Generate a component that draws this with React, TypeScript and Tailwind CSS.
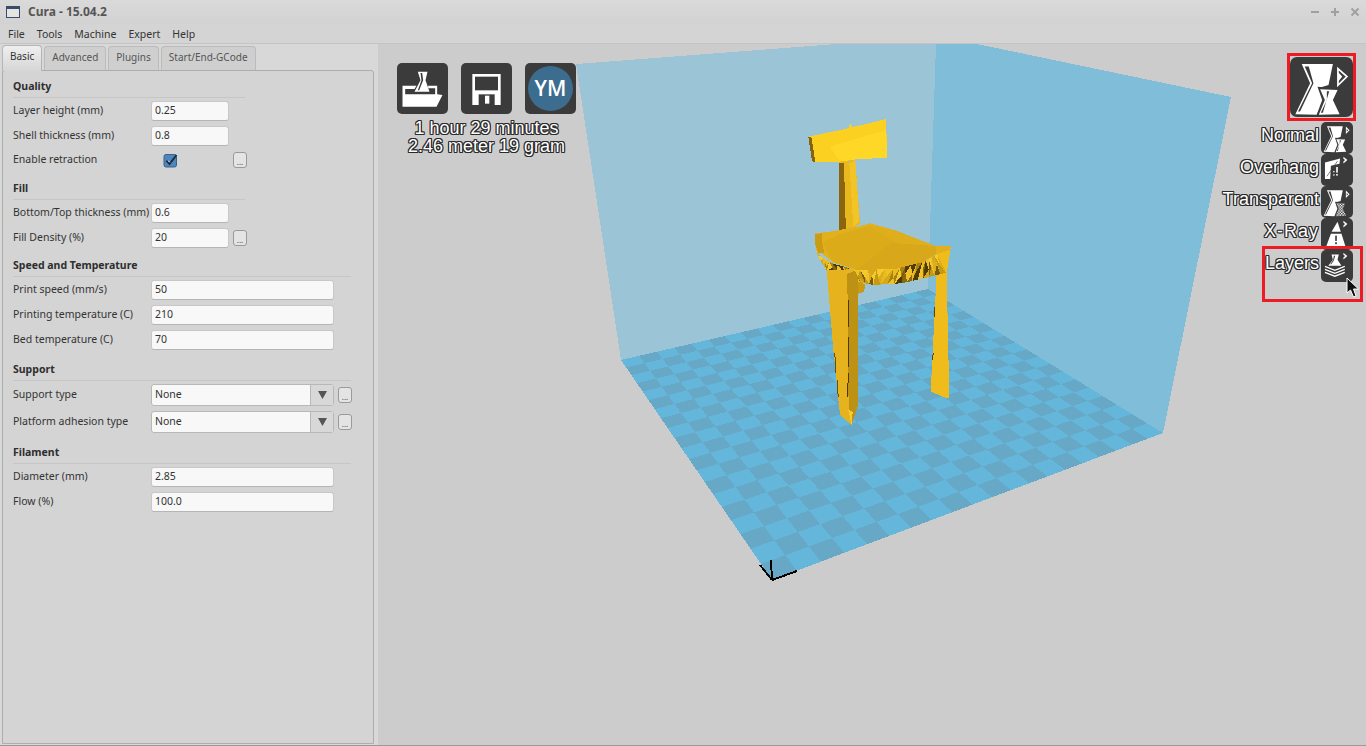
import React from "react";

const FONT = { fontFamily: '"Noto Sans", "Open Sans", sans-serif' };

// floor corners on screen, in page coordinates
const L: [number, number] = [621, 360];
const F: [number, number] = [772, 580];
const R: [number, number] = [1163, 433];
const B: [number, number] = [928, 289];

function makeProjector() {
  const [x0, y0] = L;
  const [x1, y1] = F;
  const [x2, y2] = R;
  const [x3, y3] = B;
  const dx1 = x1 - x2;
  const dx2 = x3 - x2;
  const sx = x0 - x1 + x2 - x3;
  const dy1 = y1 - y2;
  const dy2 = y3 - y2;
  const sy = y0 - y1 + y2 - y3;
  const den = dx1 * dy2 - dx2 * dy1;
  const g = (sx * dy2 - dx2 * sy) / den;
  const h = (dx1 * sy - sx * dy1) / den;
  const a = x1 - x0 + g * x1;
  const b = x3 - x0 + h * x3;
  const d = y1 - y0 + g * y1;
  const e = y3 - y0 + h * y3;
  return (u: number, v: number) => {
    const w = g * u + h * v + 1;
    return `${((a * u + b * v + x0) / w).toFixed(1)},${((d * u + e * v + y0) / w).toFixed(1)}`;
  };
}

function Floor() {
  const p = makeProjector();
  const n = 20;
  const cells: string[] = [];
  for (let i = 0; i < n; i++) {
    for (let j = 0; j < n; j++) {
      if ((i + j) % 2 === 0) continue;
      cells.push(
        [p(i / n, j / n), p((i + 1) / n, j / n), p((i + 1) / n, (j + 1) / n), p(i / n, (j + 1) / n)].join(" ")
      );
    }
  }
  return (
    <g>
      <polygon points={`${L.join(",")} ${F.join(",")} ${R.join(",")} ${B.join(",")}`} fill="#64b6da" />
      {cells.map((c, i) => (
        <polygon key={i} points={c} fill="#66a8c6" />
      ))}
    </g>
  );
}

type Pt = [number, number];

const RIM_TOP: Pt[] = [[82, 432], [125, 460], [200, 480], [320, 476], [400, 456], [442, 432]];
const RIM_BOTTOM: Pt[] = [[88, 445], [110, 482], [200, 515], [250, 525], [335, 520], [400, 505], [468, 488]];
const RIM_COLORS = ["#e8bb22", "#7a5b0a", "#d7a91a", "#f4ca2c", "#c49a14", "#4f3b06", "#eec227", "#a8820f", "#dcae1c", "#f0c429", "#8a680d"];

function along(line: Pt[], t: number): Pt {
  const s = t * (line.length - 1);
  const i = Math.min(Math.floor(s), line.length - 2);
  const f = s - i;
  return [line[i][0] + (line[i + 1][0] - line[i][0]) * f, line[i][1] + (line[i + 1][1] - line[i][1]) * f];
}

// ragged underside of the seat, a strip of small facets
function Rim() {
  const n = 24;
  const tris: { pts: string; fill: string }[] = [];
  for (let i = 0; i < n; i++) {
    const a = along(RIM_TOP, i / n);
    const b = along(RIM_TOP, (i + 1) / n);
    const c = along(RIM_BOTTOM, i / n);
    const d = along(RIM_BOTTOM, (i + 1) / n);
    const m: Pt = [(a[0] + d[0]) / 2 + ((i * 13) % 9) - 4, (a[1] + d[1]) / 2 + ((i * 7) % 11) - 5];
    tris.push({ pts: `${a} ${b} ${m}`, fill: RIM_COLORS[(i * i + 2) % 11] });
    tris.push({ pts: `${b} ${d} ${m}`, fill: RIM_COLORS[(i * 5 + 3) % 11] });
    tris.push({ pts: `${c} ${d} ${m}`, fill: RIM_COLORS[(i * i * 3 + 1) % 11] });
    tris.push({ pts: `${a} ${c} ${m}`, fill: RIM_COLORS[(i * 7 + 8) % 11] });
  }
  return (
    <g>
      {tris.map((t, i) => (
        <polygon key={i} points={t.pts} fill={t.fill} />
      ))}
    </g>
  );
}

function Chair() {
  return (
    <g transform="translate(790 110) scale(0.3333)">
      {/* right rear leg */}
      <polygon points="440,410 483,408 470,490 478,862 470,865 422,845 440,490" fill="#f0bc1c" />
      <polygon points="428,730 431,730 429,750 426,750" fill="#5c4507" />
      <polygon points="433,590 436,590 434,620 431,620" fill="#5c4507" />
      {/* under the seat */}
      <polygon points="200,512 226,524 222,546 204,552" fill="#c99a12" />
      {/* post */}
      <polygon points="148,155 196,150 210,340 170,375 148,372" fill="#e9b81f" />
      <polygon points="148,158 162,158 168,374 148,372" fill="#8a650e" />
      <polygon points="178,160 196,150 208,335 190,350" fill="#f2c426" />
      {/* back rest */}
      <polygon points="55,80 175,55 180,40 186,52 288,27 292,143 200,148 150,155 72,155" fill="#fbd021" />
      <polygon points="120,110 288,60 292,143 200,148 150,155" fill="#ffd726" />
      <polygon points="55,80 64,80 76,156 66,154" fill="#85640d" />
      {/* rim */}
      <Rim />
      {/* seat */}
      <polygon points="75,370 115,366 205,350 240,340 320,362 435,408 483,408 480,420 440,432 400,456 320,476 200,480 130,458 95,430 82,432 75,400" fill="#e2b01c" />
      <polygon points="95,398 150,372 240,348 320,362 436,408 440,430 400,456 320,476 200,480 130,456" fill="#d9a81a" />
      <polygon points="95,398 150,372 240,348 320,385 200,480 130,456" fill="#dcab19" />
      <polygon points="240,348 320,362 436,408 320,400" fill="#deae1c" />
      <polygon points="75,372 95,370 96,400 104,430 84,428 74,398" fill="#c99c14" />
      {/* front left leg */}
      <polygon points="110,480 190,478 205,505 205,880 185,945 150,915 130,720" fill="#e6b21d" />
      <polygon points="172,492 195,482 205,505 205,885 185,945 176,905" fill="#bd9113" />
      <polygon points="175,570 178,570 177,650 174,650" fill="#4d3a06" />
      <polygon points="174,680 177,680 176,770 173,770" fill="#4d3a06" />
      <polygon points="173,790 176,790 175,860 172,860" fill="#4d3a06" />
      <polygon points="133,730 136,730 139,790 136,790" fill="#6b5008" />
      <polygon points="140,810 143,810 146,860 143,860" fill="#6b5008" />
      <polygon points="185,945 175,900 188,905" fill="#f6cc30" />
    </g>
  );
}

function Axes() {
  return (
    <g stroke="#000" strokeWidth="2" fill="none">
      <line x1="772" y1="580" x2="771" y2="560" />
      <line x1="772" y1="580" x2="760" y2="565" />
      <line x1="772" y1="580" x2="797" y2="571" />
    </g>
  );
}

function Scene() {
  return (
    <svg className="absolute left-0 top-0" width="988" height="702" viewBox="378 44 988 702" shapeRendering="crispEdges">
      <polygon points="576,64 837,44 936,44 928,289 621,360" fill="#9bc4d6" />
      <polygon points="936,44 977,44 1231,97 1163,433 928,289" fill="#80bdd9" />
      <Floor />
      <Chair />
      <Axes />
    </svg>
  );
}

function Eye({ big }: { big?: boolean }) {
  return big ? (
    <g>
      <polygon points="233,56 260,80 233,106" fill="none" stroke="#fff" strokeWidth="5" />
      <polygon points="233,66 246,80 233,96" fill="#fff" />
    </g>
  ) : (
    <g>
      <polygon points="236,44 258,66 236,88" fill="#fff" />
      <polygon points="241,58 249,66 241,74" fill="#3b3b3b" />
    </g>
  );
}

function VaseIcon({ big, pattern }: { big?: boolean; pattern?: boolean }) {
  const id = "checks";
  return (
    <svg viewBox="90 22 188 178" className="block h-full w-full">
      <defs>
        <pattern id={id} width="16" height="16" patternUnits="userSpaceOnUse">
          <rect width="8" height="8" fill="#fff" />
          <rect x="8" y="8" width="8" height="8" fill="#fff" />
        </pattern>
      </defs>
      <polygon points="125,42 218,42 205,105 178,113 190,150 170,194 106,192 150,100" fill="#fff" />
      <polygon points="134,50 146,50 160,100 120,184 114,184 156,100" fill="#3b3b3b" />
      <polygon points="172,110 238,116 222,150 246,198 168,198 186,150" fill="#3b3b3b" />
      <polygon points="180,118 232,120 218,150 238,192 176,194 194,150" fill={pattern ? `url(#${id})` : "#fff"} />
      {!pattern && <polygon points="200,124 207,124 188,188 182,188 200,150" fill="#3b3b3b" />}
      <Eye big={big} />
    </svg>
  );
}

function SmallEye() {
  return <polygon points="68,5 80,15 68,25 68,19 73,15 68,11" fill="#fff" />;
}

function OverhangIcon() {
  return (
    <svg viewBox="0 0 97 90" className="block h-full w-full">
      <polygon points="12,22 58,10 56,26 30,32 28,72 12,72" fill="#fff" />
      <line x1="18" y1="64" x2="50" y2="18" stroke="#3b3b3b" strokeWidth="2" />
      <rect x="46" y="36" width="5" height="17" fill="#fff" />
      <rect x="46" y="57" width="5" height="5" fill="#fff" />
      <rect x="37" y="48" width="4" height="4" fill="#fff" />
      <rect x="37" y="58" width="4" height="4" fill="#fff" />
      <SmallEye />
    </svg>
  );
}

function XRayIcon() {
  return (
    <svg viewBox="0 0 97 90" className="block h-full w-full">
      <polygon points="50,8 60,38 32,38" fill="#fff" />
      <polygon points="30,44 62,44 74,82 16,82" fill="#fff" />
      <rect x="43" y="50" width="5" height="16" fill="#3b3b3b" />
      <rect x="43" y="70" width="5" height="6" fill="#3b3b3b" />
      <SmallEye />
    </svg>
  );
}

function LayersIcon() {
  return (
    <svg viewBox="0 0 97 90" className="block h-full w-full">
      <polygon points="32,10 54,10 50,26 62,44 22,44 36,26" fill="#fff" />
      <polygon points="39,14 43,14 39,28 31,40 28,40 37,26" fill="#3b3b3b" />
      <g fill="none" stroke="#fff" strokeWidth="4">
        <polyline points="12,46 42,58 72,46" />
        <polyline points="12,55 42,67 72,55" />
        <polyline points="12,64 42,76 72,64" />
      </g>
      <SmallEye />
    </svg>
  );
}

function LoadIcon() {
  return (
    <svg viewBox="22 24 152 153" className="block h-full w-full">
      <polygon points="84,50 113,50 107,76 119,110 74,110 92,76" fill="#fff" />
      <polygon points="92,54 97,54 100,76 88,106 84,106 95,76" fill="#3b3b3b" />
      <polygon points="38,92 80,92 74,102 46,102 46,118 136,118 136,100 115,100 115,92 142,92 142,118 158,120 140,155 38,155" fill="#fff" />
    </svg>
  );
}

function SaveIcon() {
  return (
    <svg viewBox="213 24 153 153" className="block h-full w-full">
      <polygon points="247,57 332,57 332,150 247,150" fill="#fff" />
      <rect x="255" y="65" width="69" height="41" fill="#3b3b3b" />
      <rect x="266" y="118" width="48" height="32" fill="#3b3b3b" />
      <rect x="285" y="122" width="13" height="24" fill="#fff" />
    </svg>
  );
}

function Outlined({ children, className }: { children: React.ReactNode; className?: string }) {
  return (
    <div
      className={`text-white [font-family:'Liberation_Sans',Arial,sans-serif] [text-shadow:-1px_-1px_0_#2a2a2a,1px_-1px_0_#2a2a2a,-1px_1px_0_#2a2a2a,1px_1px_0_#2a2a2a,0_-1px_0_#2a2a2a,0_1px_0_#2a2a2a,-1px_0_0_#2a2a2a,1px_0_0_#2a2a2a] ${className ?? ""}`}
    >
      {children}
    </div>
  );
}

function Toolbar() {
  return (
    <div className="absolute left-[19px] top-[19px] flex w-[179px] flex-col items-center">
      <div className="flex gap-[13px]">
        <div className="h-[51px] w-[51px] rounded-[5px] bg-[#3b3b3b]">
          <LoadIcon />
        </div>
        <div className="h-[51px] w-[51px] rounded-[5px] bg-[#3b3b3b]">
          <SaveIcon />
        </div>
        <div className="flex h-[51px] w-[51px] items-center justify-center rounded-[5px] bg-[#3b3b3b]">
          <div className="flex h-[45px] w-[45px] items-center justify-center rounded-full bg-[#3d6d8e] text-[21px] font-semibold text-white [font-family:'Open_Sans',sans-serif]">
            YM
          </div>
        </div>
      </div>
      <Outlined className="mt-[5px] text-[18px] leading-[18px]">1 hour 29 minutes</Outlined>
      <Outlined className="text-[18px] leading-[18px]">2.46 meter 19 gram</Outlined>
    </div>
  );
}

function ViewRow({ label, spaced, children }: { label: string; spaced?: boolean; children: React.ReactNode }) {
  return (
    <div className="flex h-[32px] items-center justify-end gap-[2px]">
      <Outlined className={`pb-[6px] text-[18px] leading-[18px] ${spaced ? "tracking-[1px]" : ""}`}>{label}</Outlined>
      <div className="h-[32px] w-[32px] rounded-[5px] bg-[#3b3b3b]">{children}</div>
    </div>
  );
}

function ViewModes() {
  return (
    <div className="absolute right-[13px] top-[13px] flex flex-col items-end">
      <div className="mb-[5px] h-[60px] w-[63px] rounded-[7px] bg-[#3b3b3b]">
        <VaseIcon big />
      </div>
      <ViewRow label="Normal">
        <VaseIcon />
      </ViewRow>
      <ViewRow label="Overhang">
        <OverhangIcon />
      </ViewRow>
      <ViewRow label="Transparent">
        <VaseIcon pattern />
      </ViewRow>
      <ViewRow label="X-Ray" spaced>
        <XRayIcon />
      </ViewRow>
      <ViewRow label="Layers">
        <LayersIcon />
      </ViewRow>
    </div>
  );
}

function Heading({ title, className, short }: { title: string; className?: string; short?: boolean }) {
  return (
    <div
      className={`flex h-[21px] items-center text-[10.5px] font-bold text-[#2e2e2e] ${short ? "w-[232px]" : "w-[338px]"} border-b border-b-[#c6c6c6] ${className ?? ""}`}
    >
      {title}
    </div>
  );
}

function Field({ label, value, wide, more }: { label: string; value: string; wide?: boolean; more?: boolean }) {
  return (
    <div className="flex h-[25px] items-center">
      <div className="w-[138px] whitespace-nowrap text-[10.5px] text-[#333]">{label}</div>
      <div
        className={`flex h-[20px] items-center rounded-[3px] border border-[#c8c8c8] border-b-[#b5b5b5] bg-[#f8f8f8] pl-[3px] text-[10.5px] text-[#333] ${wide ? "w-[183px]" : "w-[78px]"}`}
      >
        {value}
      </div>
      {more && <MoreButton className="ml-[4px]" />}
    </div>
  );
}

function MoreButton({ className }: { className?: string }) {
  return (
    <div
      className={`flex h-[16px] w-[14px] items-end justify-center rounded-[3px] border border-[#9a9a9a] bg-[#e4e4e4] pb-[1px] text-[8px] leading-[8px] text-[#444] ${className ?? ""}`}
    >
      ...
    </div>
  );
}

function SelectField({ label, value }: { label: string; value: string }) {
  return (
    <div className="flex h-[27px] items-center">
      <div className="w-[138px] whitespace-nowrap text-[10.5px] text-[#333]">{label}</div>
      <div className="flex h-[22px] w-[183px] rounded-[3px] border border-[#b8b8b8] bg-[#f8f8f8] text-[10.5px] text-[#333]">
        <div className="flex flex-1 items-center pl-[3px]">{value}</div>
        <div className="flex w-[23px] items-center justify-center border-l border-l-[#b8b8b8] bg-[#d8d8d8]">
          <svg width="9" height="8" viewBox="0 0 9 8">
            <polygon points="0,0 9,0 4.5,8" fill="#555" />
          </svg>
        </div>
      </div>
      <MoreButton className="ml-[4px]" />
    </div>
  );
}

function BasicPanel() {
  return (
    <div className="mb-[1px] ml-[2px] mr-[4px] flex-1 rounded-t-[3px] border border-[#adadad] bg-[#d4d4d4] pl-[10px] pt-[6px]">
      <Heading title="Quality" short />
      <Field label="Layer height (mm)" value="0.25" />
      <Field label="Shell thickness (mm)" value="0.8" />
      <div className="flex h-[24px] items-center">
        <div className="w-[150px] text-[10.5px] text-[#333]">Enable retraction</div>
        <svg width="15" height="15" viewBox="0 0 15 15">
          <rect x="1" y="1.5" width="12.5" height="12.5" rx="2" fill="#4f86bd" stroke="#3a6286" />
          <path d="M3.5 7.5 L6.5 11 L13.5 2" fill="none" stroke="#1e2c3a" strokeWidth="2" />
          <path d="M5 7.5 L6.7 9.3" stroke="#fff" strokeWidth="1" />
        </svg>
        <MoreButton className="ml-[55px]" />
      </div>

      <Heading title="Fill" short className="mt-[7px]" />
      <Field label="Bottom/Top thickness (mm)" value="0.6" />
      <Field label="Fill Density (%)" value="20" more />

      <Heading title="Speed and Temperature" className="mt-[6px]" />
      <Field label="Print speed (mm/s)" value="50" wide />
      <Field label="Printing temperature (C)" value="210" wide />
      <Field label="Bed temperature (C)" value="70" wide />

      <Heading title="Support" className="mt-[8px]" />
      <SelectField label="Support type" value="None" />
      <SelectField label="Platform adhesion type" value="None" />

      <Heading title="Filament" className="mt-[8px]" />
      <Field label="Diameter (mm)" value="2.85" wide />
      <Field label="Flow (%)" value="100.0" wide />
    </div>
  );
}

function Tab({ label, active }: { label: string; active?: boolean }) {
  return active ? (
    <div className="z-10 -mb-px flex h-[26px] items-center rounded-t-[4px] border border-b-0 border-[#b5b5b5] bg-gradient-to-b from-[#efefef] to-[#d6d6d6] px-[7px] pb-[4px] text-[10px] text-[#333]">
      {label}
    </div>
  ) : (
    <div className="mt-[1px] flex h-[24px] items-center rounded-t-[4px] border border-b-0 border-[#bbb] bg-[#cfcfcf] px-[7px] pb-[2px] text-[10px] text-[#555]">
      {label}
    </div>
  );
}

export default function App() {
  return (
    <div className="flex h-[746px] w-[1366px] flex-col overflow-hidden bg-[#d4d4d4]" style={FONT}>
      {/* title bar */}
      <div className="flex h-[24px] items-center bg-gradient-to-b from-[#dadada] to-[#d2d2d2] pl-[6px] pr-[6px]">
        <svg width="15" height="13" viewBox="0 0 15 13">
          <rect x="0.5" y="0.5" width="13" height="11" fill="#e4e4e0" stroke="#3c4a6b" />
          <rect x="0.5" y="0.5" width="13" height="2.5" fill="#3c4a6b" />
        </svg>
        <div className="ml-[7px] text-[12px] font-bold text-[#555]">Cura - 15.04.2</div>
        <div className="ml-auto flex items-center gap-[10px] text-[#999]">
          <svg width="10" height="10" viewBox="0 0 10 10">
            <rect x="1" y="4" width="8" height="2" fill="#a0a0a0" />
          </svg>
          <svg width="10" height="10" viewBox="0 0 10 10">
            <path d="M1 4h3V1h2v3h3v2H6v3H4V6H1z" fill="#a0a0a0" />
          </svg>
          <svg width="10" height="10" viewBox="0 0 10 10">
            <path d="M1.5 1.5l7 7M8.5 1.5l-7 7" stroke="#a0a0a0" strokeWidth="2" />
          </svg>
        </div>
      </div>

      {/* menu bar */}
      <div className="flex h-[20px] items-center gap-[12px] border-b border-b-[#c4c4c4] bg-[#d4d4d4] pl-[8px] pt-[2px] text-[10.5px] text-[#333]">
        <div>File</div>
        <div>Tools</div>
        <div>Machine</div>
        <div>Expert</div>
        <div>Help</div>
      </div>

      <div className="flex min-h-0 flex-1 border-b border-b-[#999]">
        {/* settings */}
        <div className="flex w-[378px] flex-col bg-[#d8d8d8]">
          <div className="flex gap-[2px] pl-[2px] pt-[1px]">
            <Tab label="Basic" active />
            <Tab label="Advanced" />
            <Tab label="Plugins" />
            <Tab label="Start/End-GCode" />
          </div>
          <BasicPanel />
        </div>

        {/* 3D view */}
        <div className="relative flex-1 bg-[#cccccc]">
          <Scene />
          <Toolbar />
          <ViewModes />
          <div className="absolute left-[909px] top-[9px] h-[68px] w-[69px] border-[3px] border-[#ed1c24]" />
          <div className="absolute left-[884px] top-[202px] h-[56px] w-[101px] border-[3px] border-[#ed1c24]" />
          <svg className="absolute left-[968px] top-[233px]" width="14" height="22" viewBox="0 0 14 22">
            <path d="M1 1 L1 16 L4.5 13 L7.5 20 L10 19 L7.5 12 L12.5 12 Z" fill="#111" stroke="#fff" strokeWidth="1" />
          </svg>
        </div>
      </div>
    </div>
  );
}
